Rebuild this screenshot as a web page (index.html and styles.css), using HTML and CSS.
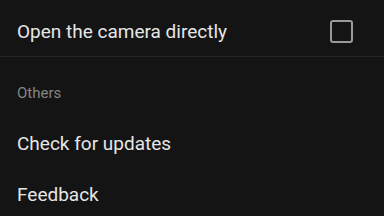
FILE: index.html
```html
<!DOCTYPE html>
<html lang="en">

<head>
    <meta charset="UTF-8">
    <meta name="viewport" content="width=device-width, initial-scale=1.0">
    <title>Settings</title>
    <link rel="stylesheet" href="styles.css">
</head>

<body>
    <div class="settings">
        <!-- camera -->
        <div class="row row_first">
            <span class="label">Open the camera directly</span>
            <span class="checkbox"></span>
        </div>
        <div class="divider"></div>
        <!-- others -->
        <div class="section_title">Others</div>
        <div class="row">
            <span class="label">Check for updates</span>
        </div>
        <div class="row">
            <span class="label">Feedback</span>
        </div>
    </div>
</body>

</html>
```

FILE: styles.css
```css
* {
    margin: 0;
    padding: 0;
    box-sizing: border-box;
}

html,
body {
    width: 384px;
    height: 216px;
    overflow: hidden;
    background-color: #141414;
}

body {
    font-family: Roboto, "Noto Sans", sans-serif;
    color: #e6e6e6;
}

.settings {
    display: flex;
    flex-direction: column;
}

.row {
    display: flex;
    align-items: center;
    justify-content: space-between;
    height: 51px;
    padding: 0 31px 0 17px;
}

.row_first {
    height: 49px;
    margin-top: 7px;
}

.label {
    font-size: 19px;
    line-height: 22px;
}

.checkbox {
    width: 23px;
    height: 23px;
    border: 2px solid #9a9a9a;
    border-radius: 3px;
}

.divider {
    height: 1px;
    background-color: #262626;
}

.section_title {
    height: 61px;
    padding: 28px 0 0 17px;
    font-size: 15px;
    line-height: 16px;
    color: #858585;
}
```
